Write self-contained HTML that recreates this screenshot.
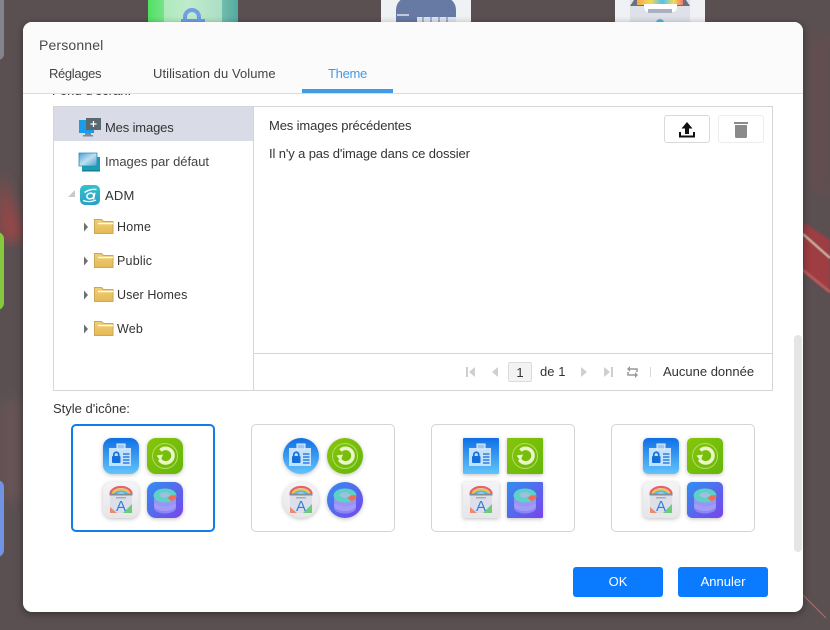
<!DOCTYPE html>
<html lang="fr"><head><meta charset="utf-8"><title>Personnel</title>
<style>
*{box-sizing:border-box}
html,body{margin:0;padding:0;width:830px;height:630px;overflow:hidden;background:#5a5052}
body{position:relative;font-family:"Liberation Sans","DejaVu Sans",sans-serif;color:#333;font-size:13px}
.a{position:absolute}
.t{position:absolute;white-space:nowrap;line-height:16px}
.card{position:absolute;top:424px;width:144px;height:108px;border:1px solid #d4d4d4;border-radius:5px;background:#fff}
.card.sel{border:2px solid #0f7ee8}
.ic{position:absolute;width:36px;height:36px;overflow:visible;filter:drop-shadow(0 1px 2px rgba(0,0,0,.25)) blur(.35px)}
</style></head><body>
<!-- background -->
<svg class="a" style="left:0;top:0" width="830" height="630" viewBox="0 0 830 630">
<defs>
<linearGradient id="b1" x1="0" y1="0" x2="0" y2="1"><stop offset="0" stop-color="#0f6fe6"/><stop offset="1" stop-color="#62c4fb"/></linearGradient>
<linearGradient id="g1" x1="0" y1="0" x2="1" y2="1"><stop offset="0" stop-color="#86c60a"/><stop offset="1" stop-color="#66b60a"/></linearGradient>
<linearGradient id="w1" x1="0" y1="0" x2="0" y2="1"><stop offset="0" stop-color="#f4f4f6"/><stop offset="1" stop-color="#e6e6ea"/></linearGradient>
<linearGradient id="p1" x1="0" y1="0" x2="1" y2="1"><stop offset="0" stop-color="#2f8ff0"/><stop offset="1" stop-color="#7a44ea"/></linearGradient>
<linearGradient id="tg" x1="0" y1="0" x2="1" y2="0"><stop offset="0" stop-color="#4fe063"/><stop offset=".45" stop-color="#b4e8c4"/><stop offset="1" stop-color="#52a9a0"/></linearGradient>
<linearGradient id="rb" x1="0" y1="0" x2="1" y2="0"><stop offset="0" stop-color="#f2a84a"/><stop offset=".3" stop-color="#f5d95a"/><stop offset=".55" stop-color="#4ec3ee"/><stop offset=".8" stop-color="#f5d95a"/><stop offset="1" stop-color="#ec7a6a"/></linearGradient>
<linearGradient id="mon" x1="0" y1="0" x2="1" y2="1"><stop offset="0" stop-color="#4aa0d8"/><stop offset=".5" stop-color="#bfe0ee"/><stop offset="1" stop-color="#4a9fcf"/></linearGradient>
<linearGradient id="fo" x1="0" y1="0" x2="0" y2="1"><stop offset="0" stop-color="#f0cf78"/><stop offset="1" stop-color="#e6b955"/></linearGradient>
<linearGradient id="adm" x1="0" y1="0" x2="0" y2="1"><stop offset="0" stop-color="#33c2cf"/><stop offset="1" stop-color="#2a9fc2"/></linearGradient>
<filter id="bl"><feGaussianBlur stdDeviation="7"/></filter>
<filter id="bl2"><feGaussianBlur stdDeviation="1.2"/></filter>
<filter id="bl3"><feGaussianBlur stdDeviation=".5"/></filter>

<symbol id="cId" viewBox="0 0 36 36"><path d="M6 10h22v18H6z" fill="#c4e2fb"/><path d="M14 6h8v5h-8z" fill="#9fc6ee" stroke="#e8f3fd"/><rect x="9" y="18" width="8.500" height="7" rx="1" fill="#146fdc"/><path d="M10.800 18.500v-1.800a2.450 2.450 0 0 1 4.900 0v1.800" fill="none" stroke="#146fdc" stroke-width="1.700"/><path d="M20 16h6.500M20 19h6.500M20 22h6.500M20 25h6.500" stroke="#2d7fdc" stroke-width="1.400"/></symbol>
<symbol id="cGr" viewBox="0 0 36 36"><circle cx="18" cy="18" r="12.500" fill="none" stroke="#b4dc62" stroke-width="1"/><path d="M12.500 21.500a7.300 7.300 0 1 0 1-9" fill="none" stroke="#eaf6c8" stroke-width="3.600"/><path d="M9.500 17.500l6.500-1-2.500 6.500z" fill="#eaf6c8"/></symbol>
<symbol id="cAp" viewBox="0 0 36 36"><path d="M7 11h22v20H7z" fill="#dcdfe8"/><path d="M7.500 12a10.500 7 0 0 1 21 0" fill="none" stroke="#e8606a" stroke-width="2.200"/><path d="M9.500 12.500a8.500 5 0 0 1 17 0" fill="none" stroke="#f1c23c" stroke-width="2"/><path d="M11.500 13a6.500 3.500 0 0 1 13 0" fill="none" stroke="#49bde8" stroke-width="2"/><path d="M6.500 11.500h23v2h-23z" fill="#858c9a"/><path d="M13 15h10v1.500H13z" fill="#a5acba"/><path d="M7 31v-6l7 6z" fill="#ef8a6c"/><path d="M29 31h-9l9-9z" fill="#6fcb7a"/><text x="18" y="29" text-anchor="middle" font-family="Liberation Sans,sans-serif" font-size="15" fill="#2f7ee0">A</text></symbol>
<symbol id="cDb" viewBox="0 0 36 36"><path d="M7 16v10a11 5.500 0 0 0 22 0V16z" fill="#8b86f6"/><ellipse cx="18" cy="23.500" rx="11" ry="5.500" fill="#a29cf8"/><ellipse cx="18" cy="19" rx="11" ry="5.500" fill="#9a94f7"/><ellipse cx="18" cy="13.500" rx="11.500" ry="7" fill="#5cd2c4"/><path d="M18 14l11.500-1a11.500 7 0 0 1-5 6.200z" fill="#ec7058"/><ellipse cx="18" cy="13" rx="5.500" ry="2.700" fill="#a3bde0"/></symbol>
</defs>
<rect width="830" height="630" fill="#5a5052"/>
<path d="M0 400H23V500H0Z" fill="#77585a" opacity=".5" filter="url(#bl)"/>
<path d="M810 40L830 30V200L810 190Z" fill="#7a4a4a" opacity=".3" filter="url(#bl)"/>
<path d="M803 222L830 240V292L803 272Z" fill="#9e3c42" filter="url(#bl2)"/>
<path d="M803 234L830 258" stroke="#c4b0a2" stroke-width="2.500" filter="url(#bl3)"/>
<path d="M803 270L830 292" stroke="#b85a5c" stroke-width="3" filter="url(#bl3)"/>
<path d="M803 595L826 618" stroke="#a87270" stroke-width="1"/>
<path d="M0 172L26 240H0Z" fill="#a84444" opacity=".85" filter="url(#bl)"/>
<rect x="-8" y="-10" width="12" height="70" rx="6" fill="#84858c"/>
<rect x="-12" y="232" width="16" height="78" rx="7" fill="#84c93e"/>
<rect x="-12" y="480" width="16" height="77" rx="7" fill="#7093e4"/>
<rect x="148" y="-10" width="90" height="32" fill="url(#tg)"/>
<path d="M164 -5H222V22H164Z" fill="#c4ecd0" opacity=".7"/>
<path d="M185 22v-5a7 7 0 0 1 14 0v5" fill="none" stroke="#6f9fe6" stroke-width="4"/>
<rect x="181" y="19" width="24" height="6" fill="#6f9fe6"/>
<rect x="381" y="-10" width="90" height="32" fill="#eff2f5"/>
<path d="M396 22V10Q396 0 408 -4H444Q456 0 456 10V22Z" fill="#667aa3"/>
<path d="M397 15h12" stroke="#dfe4ee" stroke-width="1.500"/>
<path d="M417 17h39v5h-39z" fill="#dfe4ee"/><path d="M423 16v7M431 16v7M439 16v7M447 16v7" stroke="#667aa3"/>
<rect x="615" y="-10" width="90" height="32" fill="#f0f1f5"/>
<path d="M630 -5H690V22H630Z" fill="#dfe1ea"/>
<path d="M630 6L636 -3H684L690 6Z" fill="#68707e"/>
<rect x="637" y="-2" width="46" height="7" fill="url(#rb)"/>
<path d="M644 4H677V7Q677 12 672 12H649Q644 12 644 7Z" fill="#fff"/>
<rect x="648" y="9" width="24" height="4" fill="#aab0bf"/>
<circle cx="660" cy="23" r="4" fill="#55b2e6"/>
</svg>

<!-- dialog -->
<div class="a" style="left:23px;top:22px;width:780px;height:590px;border-radius:9px;background:#fff;box-shadow:0 2px 8px rgba(0,0,0,.4);overflow:hidden">
  <div class="a" style="left:0;top:0;width:780px;height:72px;background:#fbfbfb;border-bottom:1px solid #dcdcdc"></div>
  <div class="a" style="left:279px;top:67px;width:91px;height:4px;background:#3f9be8"></div>
  <div class="a" style="left:771px;top:313px;width:8px;height:217px;border-radius:4px;background:#e5e5e5"></div>
  <div class="a" style="left:0;top:72px;width:780px;height:10px;overflow:hidden"><div class="t" style="left:29px;top:-11px;color:#333">Fond d'écran:</div></div>
</div>
<div class="t" style="left:39px;top:37px;font-size:14px;color:#4a4a4a;letter-spacing:.15px">Personnel</div>
<div class="t" style="left:49px;top:66px;color:#444;letter-spacing:-.35px">Réglages</div>
<div class="t" style="left:153px;top:66px;color:#444;letter-spacing:.06px">Utilisation du Volume</div>
<div class="t" style="left:328px;top:66px;color:#3f9be8;letter-spacing:-.3px">Theme</div>

<!-- panel -->
<div class="a" style="left:53px;top:106px;width:720px;height:285px;border:1px solid #d6d6d6;background:#fff"></div>
<div class="a" style="left:54px;top:107px;width:199px;height:34px;background:#d9dce6"></div>
<div class="a" style="left:253px;top:107px;width:1px;height:283px;background:#d6d6d6"></div>
<div class="a" style="left:254px;top:353px;width:518px;height:1px;background:#d6d6d6"></div>

<svg class="a" style="left:60px;top:105px" width="70" height="240" viewBox="0 0 70 240">
<!-- Mes images icon -->
<path d="M19 15h15v13H19z" fill="#1b9be8"/><path d="M25 28h6v2h-6zM23 30h10v1.500H23z" fill="#7d8b96"/>
<path d="M26 13h15v12H26z" fill="#5a6870"/><path d="M33.500 16v6M30.500 19h6" stroke="#fff" stroke-width="1.200"/>
<!-- Defaults icon -->
<path d="M22 52h18v13H22z" fill="#18a0b0"/><path d="M19 48h18v13H19z" fill="url(#mon)" stroke="#2a88c0" stroke-width=".8"/><path d="M22 65h18v1.500H22z" fill="#128090"/>
<!-- ADM icon -->
<rect x="20" y="80" width="20" height="20" rx="5" fill="url(#adm)"/>
<path d="M24.500 87.500Q30 83.500 36.500 84.500" fill="none" stroke="#fff" stroke-width="1.400"/>
<ellipse cx="30.300" cy="91" rx="3.500" ry="2.800" transform="rotate(-15 30.300 91)" fill="none" stroke="#fff" stroke-width="1.500"/>
<path d="M34.800 87.800L33.500 94.500" stroke="#fff" stroke-width="1.500"/>
<path d="M23 95.500Q30 98 36 95" fill="none" stroke="#fff" stroke-width="1.200"/>
<path d="M15 85v7h-7z" fill="#c9c9c9"/>
<!-- tree arrows -->
<path d="M24 117.500l4 4.500-4 4.500z" fill="#6e6e6e"/><path d="M24 151.500l4 4.500-4 4.500z" fill="#6e6e6e"/><path d="M24 185.500l4 4.500-4 4.500z" fill="#6e6e6e"/><path d="M24 219.500l4 4.500-4 4.500z" fill="#6e6e6e"/>
<!-- folders -->
<g id="fld"><path d="M34.500 114.500h7l2 2h9.500v12h-18.500z" fill="url(#fo)" stroke="#cda850"/><path d="M38 118.500h15" stroke="#fffbe8" stroke-width="1.500"/></g>
<use href="#fld" y="34"/><use href="#fld" y="68"/><use href="#fld" y="102"/>
</svg>

<div class="t" style="left:105px;top:120px;letter-spacing:-.15px">Mes images</div>
<div class="t" style="left:105px;top:154px;letter-spacing:-.05px;color:#444">Images par défaut</div>
<div class="t" style="left:105px;top:188px;letter-spacing:.2px">ADM</div>
<div class="t" style="left:117px;top:219px;font-size:12.500px;letter-spacing:.2px">Home</div>
<div class="t" style="left:117px;top:253px;font-size:12.500px;letter-spacing:.2px">Public</div>
<div class="t" style="left:117px;top:287px;font-size:12.500px;letter-spacing:.1px">User Homes</div>
<div class="t" style="left:117px;top:321px;font-size:12.500px;letter-spacing:.2px">Web</div>
<div class="t" style="left:269px;top:118px;letter-spacing:-.13px">Mes images précédentes</div>
<div class="t" style="left:269px;top:146px;letter-spacing:-.12px">Il n'y a pas d'image dans ce dossier</div>

<div class="a" style="left:664px;top:115px;width:46px;height:28px;border:1px solid #d9d9d9;border-radius:3px;background:#fff"></div>
<div class="a" style="left:718px;top:115px;width:46px;height:28px;border:1px solid #ececec;border-radius:3px;background:#fff"></div>
<svg class="a" style="left:664px;top:115px" width="100" height="28" viewBox="0 0 100 28">
<path d="M23 7l-5.500 6.500h3.500v5.500h4v-5.500h3.500z" fill="#111"/><path d="M16 17v4.500h14V17" fill="none" stroke="#111" stroke-width="2"/>
<path d="M70 8h14" stroke="#8a8a8a" stroke-width="2"/><path d="M71 10h12v11.500a1.500 1.500 0 0 1-1.500 1.500h-9a1.500 1.500 0 0 1-1.500-1.500z" fill="#8a8a8a"/>
</svg>

<!-- pagination -->
<svg class="a" style="left:460px;top:362px" width="200" height="20" viewBox="0 0 200 20">
<path d="M7 5v10" stroke="#cfcfcf" stroke-width="2"/><path d="M15 5v10l-6-5z" fill="#cfcfcf"/>
<path d="M38 5v10l-6-5z" fill="#cfcfcf"/>
<path d="M121 5v10l6-5z" fill="#cfcfcf"/>
<path d="M144 5v10l6-5z" fill="#cfcfcf"/><path d="M152 5v10" stroke="#cfcfcf" stroke-width="2"/>
<path d="M168 7h9v3M177 13h-9v-3" fill="none" stroke="#999" stroke-width="1.500"/><path d="M170 4v6l-3-3zM175 10v6l3-3z" fill="#999"/>
<path d="M190.500 5v10" stroke="#d8d8d8"/>
</svg>
<div class="a" style="left:508px;top:362px;width:24px;height:20px;border:1px solid #dcdcdc;border-radius:2px;background:#f3f3f3"></div>
<div class="t" style="left:508px;top:365px;width:24px;text-align:center">1</div>
<div class="t" style="left:540px;top:364px;letter-spacing:.05px">de 1</div>
<div class="t" style="left:663px;top:364px">Aucune donnée</div>

<div class="t" style="left:53px;top:401px">Style d'icône:</div>

<div class="card sel" style="left:71px"></div>
<div class="card" style="left:251px"></div>
<div class="card" style="left:431px"></div>
<div class="card" style="left:611px"></div>

<!-- Icon sets -->
<svg class="ic" style="left:103px;top:438px" viewBox="0 0 36 36"><rect width="36" height="36" rx="9" fill="url(#b1)"/><use href="#cId" width="36" height="36"/></svg>
<svg class="ic" style="left:147px;top:438px" viewBox="0 0 36 36"><rect width="36" height="36" rx="9" fill="url(#g1)"/><use href="#cGr" width="36" height="36"/></svg>
<svg class="ic" style="left:103px;top:482px" viewBox="0 0 36 36"><rect width="36" height="36" rx="9" fill="url(#w1)"/><use href="#cAp" width="36" height="36"/></svg>
<svg class="ic" style="left:147px;top:482px" viewBox="0 0 36 36"><rect width="36" height="36" rx="9" fill="url(#p1)"/><use href="#cDb" width="36" height="36"/></svg>

<svg class="ic" style="left:283px;top:438px" viewBox="0 0 36 36"><circle cx="18" cy="18" r="18" fill="url(#b1)"/><use href="#cId" width="36" height="36"/></svg>
<svg class="ic" style="left:327px;top:438px" viewBox="0 0 36 36"><circle cx="18" cy="18" r="18" fill="url(#g1)"/><use href="#cGr" width="36" height="36"/></svg>
<svg class="ic" style="left:283px;top:482px" viewBox="0 0 36 36"><circle cx="18" cy="18" r="18" fill="url(#w1)"/><use href="#cAp" width="36" height="36"/></svg>
<svg class="ic" style="left:327px;top:482px" viewBox="0 0 36 36"><circle cx="18" cy="18" r="18" fill="url(#p1)"/><use href="#cDb" width="36" height="36"/></svg>

<svg class="ic" style="left:463px;top:438px" viewBox="0 0 36 36"><rect width="36" height="36" rx="1" fill="url(#b1)"/><use href="#cId" width="36" height="36"/></svg>
<svg class="ic" style="left:507px;top:438px" viewBox="0 0 36 36"><rect width="36" height="36" rx="1" fill="url(#g1)"/><use href="#cGr" width="36" height="36"/></svg>
<svg class="ic" style="left:463px;top:482px" viewBox="0 0 36 36"><rect width="36" height="36" rx="1" fill="url(#w1)"/><use href="#cAp" width="36" height="36"/></svg>
<svg class="ic" style="left:507px;top:482px" viewBox="0 0 36 36"><rect width="36" height="36" rx="1" fill="url(#p1)"/><use href="#cDb" width="36" height="36"/></svg>

<svg class="ic" style="left:643px;top:438px" viewBox="0 0 36 36"><rect width="36" height="36" rx="5" fill="url(#b1)"/><use href="#cId" width="36" height="36"/></svg>
<svg class="ic" style="left:687px;top:438px" viewBox="0 0 36 36"><rect width="36" height="36" rx="5" fill="url(#g1)"/><use href="#cGr" width="36" height="36"/></svg>
<svg class="ic" style="left:643px;top:482px" viewBox="0 0 36 36"><rect width="36" height="36" rx="5" fill="url(#w1)"/><use href="#cAp" width="36" height="36"/></svg>
<svg class="ic" style="left:687px;top:482px" viewBox="0 0 36 36"><rect width="36" height="36" rx="5" fill="url(#p1)"/><use href="#cDb" width="36" height="36"/></svg>

<div class="a" style="left:573px;top:567px;width:90px;height:30px;border-radius:3px;background:#0a7bff;color:#fff;text-align:center;line-height:30px">OK</div>
<div class="a" style="left:678px;top:567px;width:90px;height:30px;border-radius:3px;background:#0a7bff;color:#fff;text-align:center;line-height:30px">Annuler</div>
</body></html>
